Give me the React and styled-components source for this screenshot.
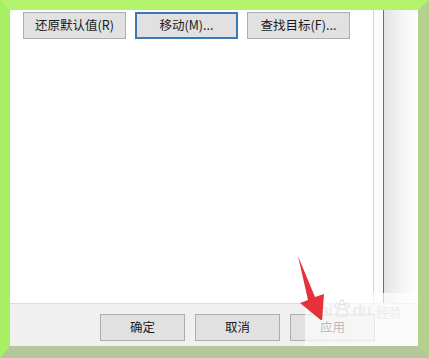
import React from 'react';
import styled, { createGlobalStyle } from 'styled-components';

const GlobalStyle = createGlobalStyle`
  html, body {
    margin: 0;
    padding: 0;
    width: 429px;
    height: 358px;
    overflow: hidden;
    background: #ffffff;
  }
  * {
    box-sizing: border-box;
  }
`;

const Frame = styled.div`
  position: relative;
  width: 429px;
  height: 358px;
  display: flex;
  flex-direction: column;
  border-style: solid;
  border-width: 10px 11px 12px 10px;
  border-top-color: #b3f46c;
  border-left-color: #a7f063;
  border-right-color: #b6d08d;
  border-bottom-color: #b5c79a;
  font-family: "Noto Sans CJK SC", "Microsoft YaHei", sans-serif;
  font-size: 12.5px;
  color: #1a1a1a;
`;

const Main = styled.div`
  flex: 1;
  display: flex;
  background: #ffffff;
`;

const Content = styled.div`
  flex: 1;
  padding: 2px 0 0 13px;
`;

const ButtonRow = styled.div`
  display: flex;
  gap: 9px;
`;

const Button = styled.div`
  width: ${p => p.$width || 85}px;
  height: 27px;
  display: flex;
  align-items: center;
  justify-content: center;
  background: #e1e1e1;
  border: ${p => (p.$focused ? '2px solid #3b79b4' : '1px solid #adadad')};
  line-height: 1;
  white-space: nowrap;
`;

const ScrollStrip = styled.div`
  width: 45px;
  display: flex;
  border-left: 1px solid #d6d6d6;
`;

const ScrollGap = styled.div`
  width: 9px;
  background: #fbfbfb;
`;

const ScrollShade = styled.div`
  flex: 1;
  border-left: 1px solid #6e6e6e;
  background: linear-gradient(to right, #e4e4e4, #f6f6f6 60%, #ffffff);
`;

const Footer = styled.div`
  height: 43px;
  display: flex;
  justify-content: flex-end;
  align-items: flex-start;
  gap: 10px;
  padding: 10px 43px 0 0;
  background: #f0f0f0;
  border-top: 1px solid #dcdcdc;
`;

const Watermark = styled.div`
  position: absolute;
  right: 0;
  bottom: 0;
  width: 113px;
  height: 53px;
  background: rgba(255, 255, 255, 0.66);
  box-shadow: inset 0 0 0 40px rgba(255, 255, 255, 0.1);
`;

const Logo = styled.div`
  position: absolute;
  left: 4px;
  top: 6px;
  display: flex;
  align-items: flex-end;
  white-space: nowrap;
  font-family: "Liberation Sans", Arial, sans-serif;
  font-size: 16px;
  line-height: 16px;
  font-weight: bold;
  color: #ececec;
  letter-spacing: -0.5px;
`;

const LogoCjk = styled.span`
  margin-left: 5px;
  font-family: "Noto Sans CJK SC", sans-serif;
  font-size: 13px;
  line-height: 15px;
  font-weight: normal;
`;

const Site = styled.div`
  position: absolute;
  left: 3px;
  bottom: 1px;
  font-family: "Liberation Sans", Arial, sans-serif;
  font-size: 8px;
  line-height: 9px;
  color: #f0f0f0;
`;

const Arrow = styled.svg`
  position: absolute;
  left: 280px;
  top: 240px;
`;

const Paw = () => (
  <svg width="18" height="20" viewBox="0 0 22 24" style={{ margin: '0 1px 0' }}>
    <g fill="none" stroke="#e6e6e6" strokeWidth="1.6">
      <ellipse cx="5" cy="8" rx="2.5" ry="3" />
      <ellipse cx="11" cy="4" rx="2.5" ry="3" />
      <ellipse cx="17" cy="8" rx="2.5" ry="3" />
      <path d="M4 19 C4 13 8 12 11 12 C14 12 18 13 18 19 C18 22 4 22 4 19 Z" />
    </g>
  </svg>
);

export default function App() {
  return (
    <>
      <GlobalStyle />
      <Frame>
        <Main>
          <Content>
            <ButtonRow>
              <Button $width={103}>还原默认值(R)</Button>
              <Button $width={103} $focused>移动(M)...</Button>
              <Button $width={103}>查找目标(F)...</Button>
            </ButtonRow>
          </Content>
          <ScrollStrip>
            <ScrollGap />
            <ScrollShade />
          </ScrollStrip>
        </Main>
        <Footer>
          <Button>确定</Button>
          <Button>取消</Button>
          <Button>应用</Button>
        </Footer>
        <Watermark>
          <Logo>
            Bai<Paw />du<LogoCjk>经验</LogoCjk>
          </Logo>
          <Site>jingyan.baidu.com</Site>
        </Watermark>
        <Arrow width="45" height="70" viewBox="0 0 45 70">
          <polygon
            points="8,6 25,47 34,44 32,71 10,53 18,50"
            fill="#e5323a"
          />
        </Arrow>
      </Frame>
    </>
  );
}
